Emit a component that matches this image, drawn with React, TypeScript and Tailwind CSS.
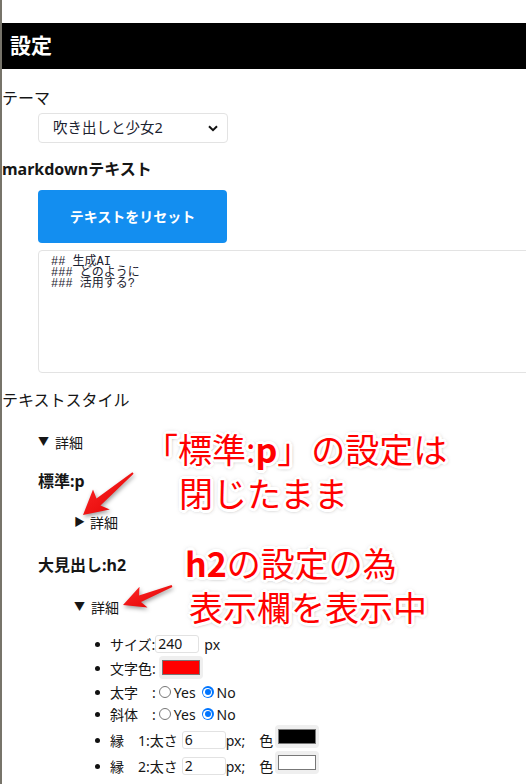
import React from 'react';

const outline =
  "[text-shadow:3px_0_0_#fff,-3px_0_0_#fff,0_3px_0_#fff,0_-3px_0_#fff,2px_2px_0_#fff,-2px_2px_0_#fff,2px_-2px_0_#fff,-2px_-2px_0_#fff,3px_1px_0_#fff,-3px_1px_0_#fff,1px_3px_0_#fff,1px_-3px_0_#fff,0_0_5px_rgba(0,0,0,0.55),1px_1px_4px_rgba(0,0,0,0.45)]";

function Chevron() {
  return (
    <svg width="10" height="7" viewBox="0 0 10 7" className="mr-[3px]">
      <path d="M1 1.2 L5 5.2 L9 1.2" fill="none" stroke="#111" strokeWidth="2" />
    </svg>
  );
}

function TextBox({ value }: { value: string }) {
  return (
    <span className="inline-flex h-[18px] w-[44px] items-center rounded-[3px] border border-[#e2e2e2] px-[2px] text-[14px] leading-none">
      {value}
    </span>
  );
}

function ColorBox({ swatch, up }: { swatch: string; up?: boolean }) {
  return (
    <span
      className={
        'inline-flex h-[23px] w-[44px] items-center justify-center rounded-[4px] bg-[#efefef] ' +
        (up ? '-translate-y-[3px]' : '')
      }
    >
      <span className={'h-[15px] w-[38px] border border-[#777] ' + swatch} />
    </span>
  );
}

function Radio({ checked }: { checked?: boolean }) {
  if (checked) {
    return (
      <span className="mx-[3px] inline-flex h-[12px] w-[12px] items-center justify-center rounded-full bg-[#0075ff]">
        <span className="flex h-[9px] w-[9px] items-center justify-center rounded-full bg-white">
          <span className="h-[6px] w-[6px] rounded-full bg-[#0075ff]" />
        </span>
      </span>
    );
  }
  return <span className="mx-[3px] inline-block h-[12px] w-[12px] rounded-full border border-[#767676]" />;
}

function Item({ h, className, children }: { h: string; className?: string; children: React.ReactNode }) {
  return (
    <li className={'flex items-center text-[14px] ' + h + ' ' + (className ?? '')}>
      <span className="mr-[10px] h-[5px] w-[5px] rounded-full bg-[#111]" />
      {children}
    </li>
  );
}

export default function App() {
  return (
    <div className="relative flex h-[784px] w-[526px] overflow-hidden bg-white font-['Noto_Sans','Noto_Sans_CJK_JP',sans-serif] text-[#161616]">
      {/* window edge on the left */}
      <div className="w-[2px] shrink-0 bg-[#77746a]" />

      <div className="min-w-0 flex-1 pt-[23px]">
        <header className="flex h-[46px] items-center bg-black pl-[8px] text-[21px] font-bold text-white">
          設定
        </header>

        {/* Theme */}
        <h3 className="mt-[17px] text-[16px] leading-[24px]">テーマ</h3>
        <div className="ml-[36px] mt-[3px] flex h-[30px] w-[190px] items-center justify-between rounded-[4px] border border-[#e3e3e3] pl-[14px] pr-[6px] text-[14.5px] text-[#1c2230]">
          <span>吹き出しと少女2</span>
          <Chevron />
        </div>

        {/* Markdown */}
        <h3 className="mt-[14px] text-[16px] font-bold leading-[24px]">markdownテキスト</h3>
        <button className="ml-[36px] mt-[9px] flex h-[53px] w-[189px] items-center justify-center rounded-[4px] bg-[#138ef0] text-[14px] font-bold text-white">
          テキストをリセット
        </button>
        <div className="ml-[36px] mt-[7px] h-[123px] w-[520px] whitespace-pre rounded-[4px] border border-[#e3e3e3] px-[12px] pt-[6px] font-['Liberation_Mono','Noto_Sans_CJK_JP',monospace] text-[12px] leading-[11px] text-[#1c2230]">
          {'## 生成AI\n### どのように\n### 活用する?'}
        </div>

        {/* Text style */}
        <h3 className="mt-[15px] text-[16px] leading-[24px]">テキストスタイル</h3>
        <div className="ml-[36px] mt-[20px] flex h-[20px] items-center text-[14px]">
          <span className="mr-[6px] text-[11px]">▼</span>詳細
        </div>
        <div className="ml-[36px] mt-[17px] text-[16px] font-bold leading-[24px]">標準:p</div>
        <div className="ml-[72px] mt-[19px] flex h-[20px] items-center text-[14px]">
          <span className="mr-[5px] text-[11px]">▶</span>詳細
        </div>
        <div className="ml-[36px] mt-[21px] text-[16px] font-bold leading-[24px]">大見出し:h2</div>
        <div className="ml-[72px] mt-[20px] flex h-[20px] items-center text-[14px]">
          <span className="mr-[6px] text-[11px]">▼</span>詳細
        </div>

        <ul className="mt-[16px] pl-[93px]">
          <Item h="h-[22px]">
            サイズ:<TextBox value="240" /><span className="ml-[5px]">px</span>
          </Item>
          <Item h="h-[26px]">
            文字色:<span className="ml-[3px]"><ColorBox swatch="bg-[#ff0000]" /></span>
          </Item>
          <Item h="h-[22px]">
            太字　:<Radio />Yes<span className="w-[3px]" /><Radio checked />No
          </Item>
          <Item h="h-[22px]">
            斜体　:<Radio />Yes<span className="w-[3px]" /><Radio checked />No
          </Item>
          <Item h="h-[26px]" className="mt-[2px]">
            縁　1:太さ<span className="w-[4px]" /><TextBox value="6" />px;　色
            <span className="ml-[2px]"><ColorBox swatch="bg-black" up /></span>
          </Item>
          <Item h="h-[26px]">
            縁　2:太さ<span className="w-[4px]" /><TextBox value="2" />px;　色
            <span className="ml-[2px]"><ColorBox swatch="bg-white" up /></span>
          </Item>
        </ul>
      </div>

      {/* annotation layer */}
      <div className="pointer-events-none absolute inset-0 font-['Noto_Sans_CJK_JP',sans-serif] text-[34px] font-normal leading-[30px] text-[#ff0000]">
        <div className={'absolute left-[144px] top-[434px] whitespace-nowrap ' + outline}>
          「標準:<span className="font-bold">p</span>」の設定は
        </div>
        <div className={'absolute left-[179px] top-[478px] whitespace-nowrap ' + outline}>閉じたまま</div>
        <div className={'absolute left-[185px] top-[548px] whitespace-nowrap ' + outline}>
          <span className="font-bold">h2</span>の設定の為
        </div>
        <div className={'absolute left-[189px] top-[592px] whitespace-nowrap ' + outline}>表示欄を表示中</div>

        <svg width="526" height="784" className="absolute left-0 top-0 drop-shadow-[1px_2px_2px_rgba(0,0,0,0.4)]">
          <defs>
            <linearGradient id="ar" x1="0" y1="0" x2="1" y2="1">
              <stop offset="0" stopColor="#ff2a2a" />
              <stop offset="1" stopColor="#e00000" />
            </linearGradient>
          </defs>
          <polygon
            points="83,515 93,489.6 96.5,498.5 132.4,472.2 133.6,473.8 100.5,505.5 109.8,509.6"
            fill="url(#ar)"
          />
          <polygon
            points="123,605 139.5,586.8 139,595.5 171.6,585.1 172.4,586.9 141,602 147.5,607.4"
            fill="url(#ar)"
          />
        </svg>
      </div>
    </div>
  );
}
